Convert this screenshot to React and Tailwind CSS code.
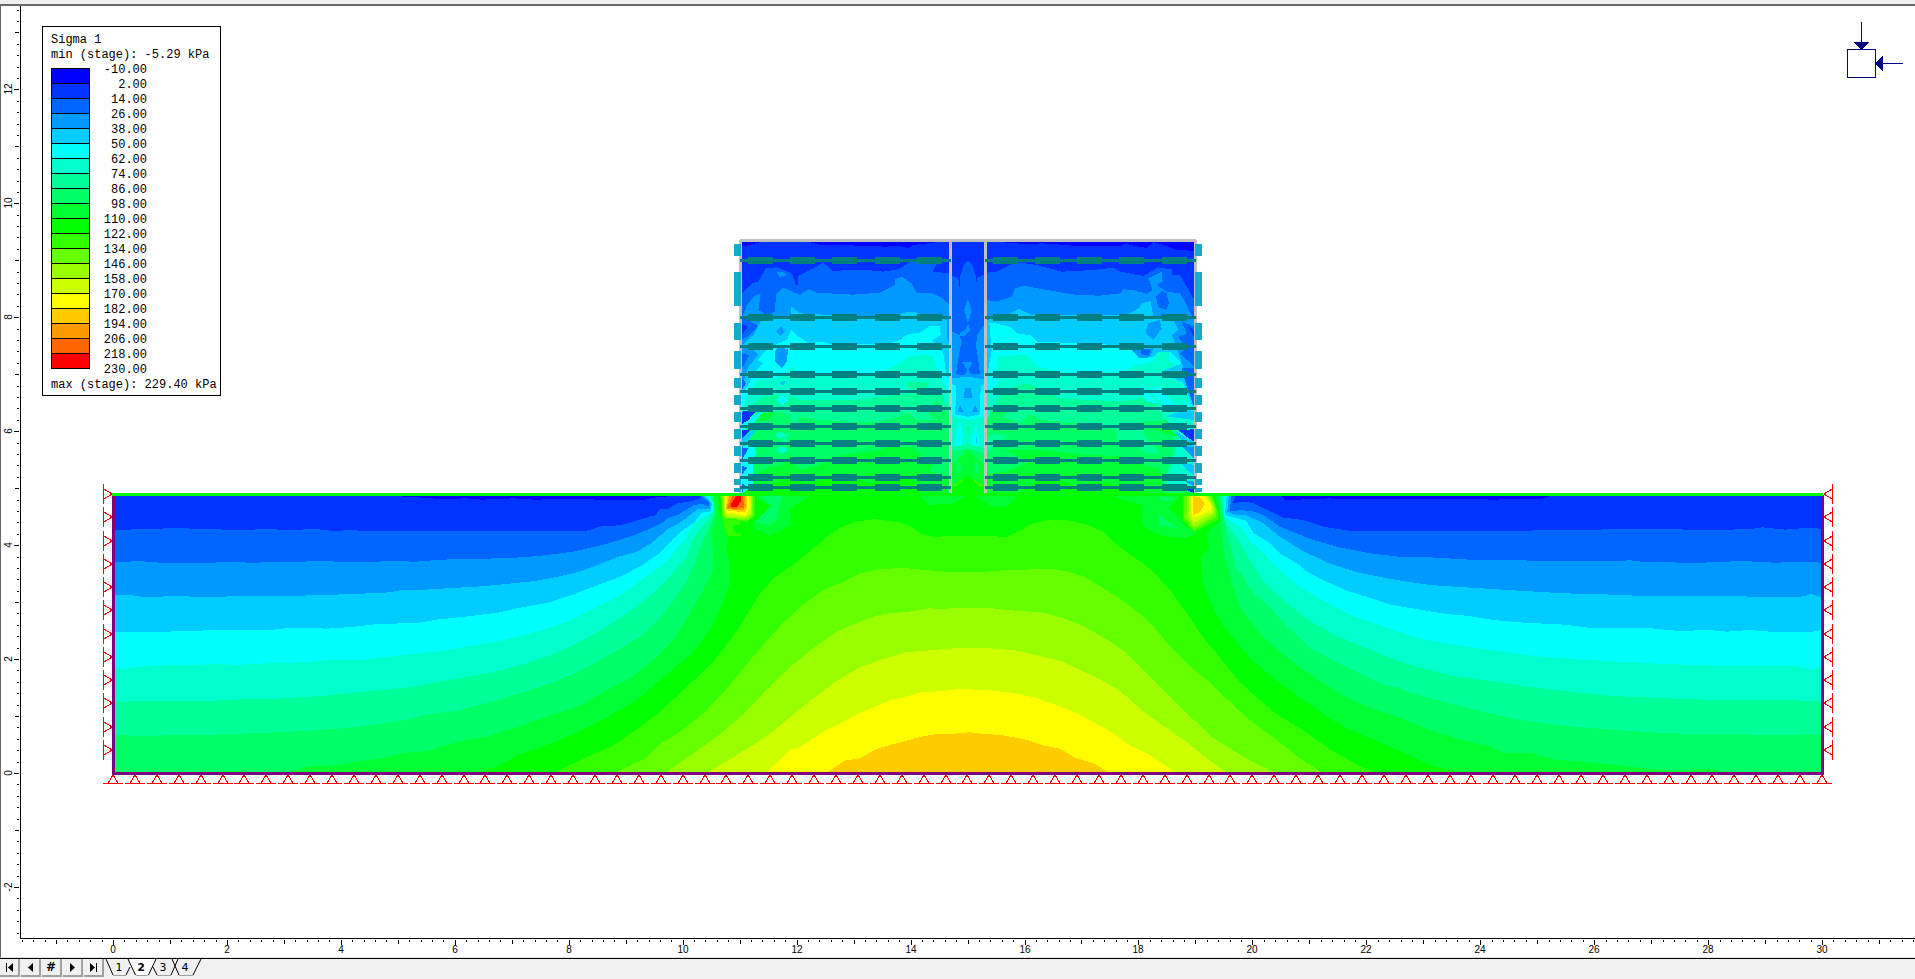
import clsx from "clsx";

const COLORS = [
  "#0000ff", "#0033ff", "#0066ff", "#0099ff", "#00ccff",
  "#00ffff", "#00ffcc", "#00ff99", "#00ff66", "#00ff33",
  "#00ff00", "#33ff00", "#66ff00", "#99ff00", "#ccff00",
  "#ffff00", "#ffcc00", "#ff9900", "#ff6600", "#ff0000",
];

const LEVELS = Array.from({ length: 21 }, (_, i) => (-10 + i * 12).toFixed(2));

// Every zone is [colour index, polygon points], painted from back to front.
const MOUND = [
  [11, "-255,906 -160,850 -120,830 -60,780 -10,735 50,670 100,610 130,575 165,520 200,460 225,410 245,370 280,322 320,290 350,262 385,225 420,190 450,168 480,155 525,147 560,153 590,158 615,170 640,192 670,200 755,198 850,200 885,180 910,162 950,150 980,149 1010,153 1050,165 1085,185 1120,225 1160,260 1205,300 1250,360 1285,420 1330,500 1370,560 1420,635 1469,690 1508,730 1581,785 1644,840 1711,885 1746,906"],
  [12, "-106,906 -36,865 0,822 50,785 105,730 165,655 210,585 260,515 300,460 350,405 400,360 450,335 490,310 540,297 600,294 640,299 700,305 800,305 850,300 960,297 1000,305 1040,320 1080,350 1120,380 1175,430 1210,470 1250,530 1300,590 1350,640 1400,700 1450,755 1500,800 1568,865 1620,906"],
  [13, "15,906 70,860 150,790 215,720 265,655 320,590 380,530 430,488 475,462 530,437 560,430 610,425 660,415 690,417 740,413 800,413 850,420 940,428 990,445 1040,470 1100,512 1145,550 1200,620 1250,680 1300,740 1350,800 1400,838 1450,875 1505,906"],
  [14, "118,906 165,872 215,835 265,795 315,745 370,690 430,635 490,592 540,570 600,547 670,540 740,533 800,534 870,541 920,555 980,572 1030,600 1080,630 1130,665 1180,720 1230,765 1290,815 1340,865 1385,906"],
  [15, "260,906 290,875 318,838 340,835 400,785 450,755 480,735 530,708 570,688 600,682 635,668 690,663 735,657 800,660 860,668 920,683 970,705 1010,723 1060,755 1110,790 1150,825 1200,855 1260,906"],
  [16, "410,906 455,870 485,867 535,835 580,820 640,800 680,792 740,790 760,786 780,790 840,796 900,810 940,826 980,836 1020,865 1060,878 1098,906"],
];

const LEFT_SOIL = [
  [9, "61,78 61,906 960,906 1005,885 1050,855 1130,820 1190,790 1270,740 1340,690 1426,600 1471,555 1491,525 1521,475 1551,400 1568,340 1568,280 1558,235 1564,205 1546,165 1536,120 1540,78"],
  [8, "61,78 61,906 490,906 535,888 610,886 650,876 720,863 780,847 830,843 900,815 970,801 1050,770 1120,740 1200,708 1260,665 1330,620 1390,560 1430,510 1465,440 1495,375 1528,300 1525,225 1525,175 1540,120 1533,78"],
  [9, "300,906 350,902 400,906"],
  [7, "61,78 61,796 120,797 240,796 330,793 460,787 540,781 630,774 670,768 760,752 830,733 900,722 945,707 1000,690 1060,667 1120,645 1190,609 1250,570 1310,528 1350,498 1395,447 1430,390 1460,340 1478,290 1500,220 1522,160 1535,110 1528,78"],
  [6, "61,78 61,696 150,692 300,692 370,688 480,685 570,678 630,670 720,660 790,650 850,636 940,617 985,608 1040,590 1100,568 1150,545 1220,502 1265,470 1320,428 1380,370 1425,315 1440,290 1460,265 1475,215 1490,185 1513,152 1530,110 1520,78"],
  [5, "61,78 61,595 80,597 105,592 165,587 300,583 370,584 440,580 520,577 590,570 680,569 720,562 780,554 830,547 870,542 920,530 990,516 1040,502 1110,480 1170,455 1235,415 1300,375 1345,335 1385,300 1420,265 1435,235 1460,205 1477,165 1505,140 1525,128 1528,100 1515,78"],
  [4, "61,78 61,487 150,487 210,484 320,480 435,481 480,475 530,474 580,476 640,471 700,463 805,458 850,449 920,440 1000,428 1050,414 1120,399 1180,375 1240,347 1300,320 1350,288 1395,250 1430,205 1455,178 1480,158 1498,128 1520,125 1524,100 1508,78"],
  [3, "61,78 61,374 105,376 125,380 240,379 260,381 410,378 460,379 540,376 650,372 735,367 760,361 790,361 860,356 960,349 1020,342 1090,333 1140,322 1200,305 1240,287 1290,262 1340,245 1375,220 1415,178 1450,155 1475,130 1490,117 1520,116 1520,98 1502,78"],
  [2, "61,78 61,276 95,275 120,273 150,276 180,279 270,278 350,277 410,278 440,276 560,274 700,276 720,273 800,275 860,269 950,266 1020,265 1100,258 1180,246 1220,235 1265,222 1300,209 1345,190 1400,160 1415,145 1440,135 1480,105 1500,102 1516,108 1516,98 1505,85 1498,78"],
  [1, "61,78 61,180 115,178 193,175 240,175 262,178 380,179 430,178 485,179 560,178 590,182 655,181 665,183 1215,183 1255,168 1300,166 1345,150 1385,135 1397,118 1415,117 1440,100 1480,92 1498,84 1492,78"],
  [0, "740,78 830,84 860,88 920,85 960,89 1040,85 1090,89 1200,86 1240,89 1360,89 1380,83 1430,78"],
];

const RIGHT_SOIL = [
  [9, "1470,78 -61,78 -52,150 -84,190 -78,235 -99,260 -94,340 -73,400 -42,470 0,528 25,565 90,630 160,690 240,755 290,785 370,825 410,845 480,885 545,906 1470,906"],
  [8, "1470,78 -53,78 -50,160 -38,260 -20,340 0,412 50,490 100,545 150,590 200,630 260,675 330,715 390,737 480,780 570,813 630,828 670,850 740,850 800,870 860,874 960,885 1030,897 1090,900 1200,897 1220,906 1470,906"],
  [7, "1470,78 -50,78 -44,130 -32,190 -11,290 0,305 30,365 70,405 120,470 180,535 250,580 330,625 360,643 400,652 430,668 500,690 580,715 700,748 820,768 920,777 1070,790 1230,792 1380,796 1440,793 1470,796"],
  [6, "1470,78 -46,78 -36,160 0,220 25,270 55,328 90,370 140,420 180,455 240,495 310,530 380,563 440,588 540,618 650,635 740,652 850,667 930,677 1080,685 1200,690 1330,690 1440,692 1470,692"],
  [5, "1470,78 -40,78 -40,140 0,170 30,220 45,230 90,290 150,350 210,392 290,440 340,460 420,493 480,512 560,528 670,546 760,560 860,569 960,575 1080,582 1200,587 1400,587 1450,600 1470,590"],
  [4, "1470,78 -34,78 -38,135 0,148 15,152 35,190 70,215 100,250 150,285 165,302 200,325 270,362 330,384 380,404 450,418 520,432 580,438 640,450 720,458 820,464 880,473 1030,474 1110,483 1190,480 1230,485 1290,480 1360,487 1440,487 1470,480"],
  [3, "1470,78 -28,78 -32,125 -10,135 15,135 60,160 95,195 150,237 220,278 300,308 380,327 480,345 570,352 690,361 820,370 920,373 1040,379 1200,379 1350,380 1420,380 1445,372 1470,382"],
  [2, "1470,78 -22,78 -26,124 0,121 25,122 60,135 100,170 180,208 250,232 330,250 400,260 480,262 580,269 700,271 850,274 970,274 980,270 1030,277 1170,278 1270,273 1350,278 1430,276 1470,278"],
  [1, "1470,78 -12,78 -18,100 5,96 30,98 70,120 110,143 160,150 210,170 280,183 460,183 520,184 600,183 680,184 750,181 830,181 930,178 1090,178 1210,180 1290,177 1320,172 1380,179 1430,174 1470,176"],
  [0, "105,78 115,89 200,88 225,85 260,88 340,86 600,88 650,89 680,86 765,86 785,78"],
];

const LEFT_TOE = [
  [9, "195,34 360,34 335,50 320,58 298,75 305,118 268,140 235,152 215,138 198,137 188,115 215,90 240,64 200,40"],
  [8, "210,34 278,34 270,60 262,105 235,120 195,112 222,85 247,62"],
  [7, "232,90 235,98 228,98"],
  [9, "72,34 98,34 100,90 112,130 95,145 76,110"],
  [10, "84,34 200,34 200,60 215,62 190,110 160,120 112,120 90,92"],
  [11, "91,34 194,34 194,92 172,112 150,112 150,120 126,122 132,142 154,146 154,153 115,152 106,140 98,104"],
  [12, "94,34 190,34 190,90 172,107 130,102 98,96"],
  [13, "98,34 186,34 187,90 165,103 104,97"],
  [14, "102,34 182,34 184,84 165,97 104,90"],
  [15, "106,34 177,34 180,66 168,92 138,86 106,84"],
  [16, "111,34 170,34 172,66 165,82 108,76"],
  [17, "117,34 164,34 167,62 160,76 110,72"],
  [18, "127,34 160,34 161,68 136,72 112,68"],
  [19, "138,34 154,34 152,50 140,66 122,66 122,58"],
];

const RIGHT_TOE = [
  [9, "-110,34 85,34 92,100 140,144 110,160 80,158 30,150 2,136 -22,120 -25,60"],
  [8, "28,34 40,34 76,38 55,48 34,46"],
  [8, "28,86 52,108 92,132 40,122 26,124"],
  [10, "88,34 56,70 90,98 100,118 140,143 180,128 213,110 208,80 190,34"],
  [11, "98,34 188,34 206,84 205,104 132,141 98,104"],
  [12, "103,34 184,34 200,78 198,96 132,135 103,100"],
  [13, "110,34 177,34 196,72 193,90 132,127 110,94"],
  [14, "117,34 171,34 190,66 190,84 150,104 130,116 118,90"],
  [15, "123,34 162,34 183,60 183,75 158,88 130,98 124,84"],
  [16, "130,34 150,36 165,58 148,82 130,90"],
];

const LEFT_WALL_FILL = [
  [10, "66,66 690,66 690,819 66,819"],
  [9, "66,66 66,819 100,800 160,790 205,768 260,790 340,775 400,782 420,778 450,790 470,780 560,772 580,785 605,819 690,819 690,66"],
  [8, "66,66 66,795 90,770 150,740 185,735 215,700 220,730 240,750 300,735 330,712 400,700 480,690 500,682 570,680 600,700 610,722 640,730 630,755 690,770 690,66"],
  [7, "66,66 66,640 110,600 170,580 190,575 215,600 205,650 185,700 165,690 200,640 240,590 300,600 380,605 480,605 565,580 590,600 640,600 625,575 650,540 690,590 690,66"],
  [6, "66,66 66,610 90,560 130,530 175,525 185,545 215,530 240,540 400,540 500,530 600,515 565,505 560,485 630,485 620,505 665,500 675,550 690,560 690,66"],
  [5, "66,66 66,570 85,525 110,480 170,475 200,455 220,440 225,458 480,458 540,430 565,410 620,405 640,410 655,460 675,500 690,530 690,66"],
  [4, "66,66 66,520 88,490 100,460 130,430 112,420 140,390 165,375 200,360 215,330 235,350 265,370 310,365 330,372 500,372 540,360 565,342 600,338 630,318 660,318 662,345 635,362 655,380 670,400 680,470 690,480 690,66"],
  [3, "66,66 66,500 85,440 115,405 95,385 66,375 100,345 110,325 125,300 180,292 215,290 212,258 240,280 330,285 400,290 540,288 570,277 600,290 640,285 680,300 680,350 690,375 690,66"],
  [2, "66,66 66,360 90,345 115,318 66,290 85,250 105,225 122,222 115,270 140,285 165,275 168,225 190,203 240,225 265,207 290,218 400,224 480,218 525,195 525,178 545,170 575,190 590,218 635,220 670,235 690,258 690,66"],
  [1, "66,66 66,222 95,190 115,185 138,145 170,142 210,158 218,165 228,195 234,195 234,168 280,145 310,128 338,152 440,150 490,155 535,148 565,128 590,115 650,130 638,155 690,160 690,66"],
  [0, "66,66 66,80 125,66"],
  [0, "265,66 300,74 420,77 500,80 535,77 565,84 580,75 660,66"],
  [3, "170,156 195,158 198,168 178,170"],
  [1, "66,310 84,320 66,345"],
  [3, "168,335 183,318 195,335 182,348"],
  [3, "175,380 205,388 200,425 185,445 165,425 165,395"],
  [4, "180,485 200,483 190,496 182,494"],
  [2, "66,400 88,405 75,430 66,445"],
  [2, "66,475 78,490 66,510"],
  [4, "540,282 560,276 590,276 600,290 580,302 550,300"],
  [5, "170,540 185,525 205,540 188,558"],
  [6, "165,645 185,635 200,645 180,658"],
  [6, "170,692 190,680 205,690 188,702"],
  [9, "105,598 130,580 165,575 150,595 115,605"],
  [5, "66,640 115,595 125,575 66,605"],
  [1, "66,575 110,570 85,600 66,612"],
  [4, "66,690 100,640 110,630 66,640"],
  [1, "66,630 90,630 72,650 66,655"],
  [5, "66,760 110,700 100,670 66,680"],
  [2, "66,682 85,685 66,720"],
  [5, "66,800 100,765 100,725 66,740"],
  [2, "66,738 82,742 66,765"],
  [5, "66,819 100,800 100,780 66,785"],
  [2, "66,790 75,795 66,819"],
];

const SLEEVE_FILL = [
  [10, "36,20 132,20 132,773 36,773"],
  [9, "36,20 132,20 132,755 105,735 84,722 62,735 36,755"],
  [8, "36,20 132,20 132,690 110,670 84,645 60,668 36,690"],
  [7, "36,20 132,20 132,655 84,640 36,650"],
  [6, "36,20 132,20 132,640 110,632 84,628 60,632 36,636"],
  [5, "36,20 132,20 132,545 100,553 84,556 60,550 36,540"],
  [4, "36,20 132,20 132,450 122,455 120,538 84,546 46,538 48,450 36,448"],
  [3, "36,20 132,20 132,433 84,425 36,430"],
  [2, "36,20 132,20 132,270 112,300 108,330 114,370 120,418 95,418 84,408 70,420 48,418 55,370 65,320 58,300 36,290"],
  [1, "36,20 132,20 132,118 112,128 110,140 108,125 97,90 84,78 72,88 60,125 59,158 55,130 36,122"],
  [3, "84,192 95,225 84,265 73,225"],
  [3, "84,268 92,285 75,302 58,302 62,292 76,285"],
  [3, "66,380 98,380 84,410"],
  [3, "76,460 92,460 98,490 70,490"],
  [3, "60,510 72,532 52,532"],
  [3, "106,512 116,532 95,532"],
  [5, "60,558 70,600 64,632 46,634 46,610"],
  [5, "108,565 120,632 98,632 96,605"],
  [4, "109,605 111,605 111,626 109,626"],
  [7, "78,575 92,575 84,605"],
  [8, "56,672 64,700 56,725 48,700"],
  [8, "108,672 118,700 108,725 100,700"],
  [11, "36,752 70,732 68,740 42,757"],
  [11, "100,732 132,752 126,757 102,740"],
];

const RIGHT_WALL_FILL = [
  [10, "81,66 702,66 702,819 81,819"],
  [9, "81,66 702,66 702,819 560,819 500,800 400,785 350,800 300,780 240,780 175,819 81,819"],
  [8, "81,66 81,765 150,750 200,730 160,700 120,690 250,690 380,705 480,708 550,735 600,745 610,819 702,819 702,66"],
  [7, "81,66 81,700 140,650 100,640 81,655 81,595 100,570 130,590 185,610 205,580 240,600 400,612 470,630 470,660 520,670 560,700 600,700 550,640 540,605 640,600 640,700 610,790 702,819 702,66"],
  [6, "81,66 81,600 110,540 160,500 200,490 250,510 300,535 480,545 550,535 590,555 620,600 660,640 640,720 620,790 702,819 702,66"],
  [5, "81,66 81,520 115,490 110,450 115,408 200,405 230,440 300,455 500,455 520,438 580,425 590,395 630,395 625,420 665,445 605,460 660,480 700,560 600,500 560,510 590,550 560,545 540,490 620,560 702,590 702,66"],
  [4, "81,66 81,470 95,390 88,310 105,310 150,320 170,340 210,345 230,365 420,372 520,380 535,415 580,410 630,395 665,430 605,455 670,490 702,570 702,66"],
  [3, "81,66 81,300 140,285 178,267 215,285 500,285 535,265 545,250 572,243 580,290 640,300 655,330 635,345 650,380 665,430 702,520 702,66"],
  [2, "81,66 81,240 110,245 155,230 165,205 190,197 260,210 350,225 420,227 480,220 490,208 520,210 560,222 578,210 565,175 605,155 608,185 590,195 620,215 660,220 680,255 702,300 702,66"],
  [1, "81,66 81,158 110,155 150,135 180,128 230,135 305,155 400,150 460,143 480,155 550,168 595,142 635,148 635,165 660,165 680,200 702,238 702,66"],
  [0, "81,66 150,68 200,73 245,70 340,77 480,78 500,68 510,75 560,84 580,66"],
  [0, "580,66 620,78 640,88 702,93 702,66"],
  [2, "588,230 605,212 620,220 627,250 618,270 595,262"],
  [3, "565,310 600,300 605,325 580,360 556,340"],
  [3, "515,390 580,385 570,412 540,415"],
  [2, "540,385 572,388 565,405 545,403"],
  [6, "580,415 595,395 630,395 625,415"],
  [2, "665,305 702,320 702,440 660,400 680,385 655,350 680,340"],
  [1, "685,318 702,330 702,350"],
  [2, "665,445 702,445 702,560 680,500"],
  [6, "600,500 640,505 680,560 640,550"],
  [8, "90,570 150,575 130,590 95,592"],
  [4, "620,590 680,565 702,575 702,600"],
  [9, "590,625 630,630 655,650 610,640"],
  [1, "655,630 702,628 702,665 680,650"],
  [4, "640,630 702,665 702,710 680,680"],
  [3, "665,680 702,680 702,715"],
  [4, "660,725 702,735 702,765 680,750"],
  [3, "670,780 702,785 702,800"],
  [1, "680,808 702,805 702,819 690,815"],
];

const FOUNDATION_PATCHES = [
  [9, "600,828 625,855 700,850 740,828"],
  [9, "765,828 820,862 860,862 890,828"],
];

const REBAR_ROWS = [260, 317, 346, 374, 391, 408, 426, 443, 460, 477, 487];
const REBAR_BLOCKS = [748, 790, 832, 875, 917, 993, 1035, 1077, 1119, 1162];
const FACING = [
  [244, 12], [272, 34], [323, 17], [351, 18], [378, 10], [395, 10],
  [412, 10], [429, 10], [446, 10], [463, 10], [479, 6], [488, 4],
];

const UNIT = 56.97;
const toX = (v) => Math.round(113 + v * UNIT);
const toY = (v) => Math.round(773 - v * UNIT);

function Zones({ data, transform }) {
  return (
    <g transform={transform}>
      {data.map(([level, points], i) => (
        <polygon key={i} points={points} fill={COLORS[level]} />
      ))}
    </g>
  );
}

function Supports() {
  const sides = Array.from({ length: 12 }, (_, i) => Math.round(494 + i * 23.27));
  const base = Array.from({ length: 79 }, (_, i) => Math.round(113 + i * 21.91));
  return (
    <g stroke="#ff0000" fill="none">
      {sides.map((y) => (
        <g key={y}>
          <path d={`M103.5 ${y - 10}v20M104 ${y - 5}L112 ${y}L104 ${y + 5}`} />
          <path d={`M1832.5 ${y - 10}v20M1832 ${y - 5}L1824 ${y}L1832 ${y + 5}`} />
        </g>
      ))}
      {base.map((x) => (
        <path key={x} d={`M${x - 10} 783.5h20M${x - 5} 783L${x} 775L${x + 5} 783`} />
      ))}
    </g>
  );
}

function Rulers() {
  const xTicks = Array.from({ length: 167 }, (_, i) => i - 8);
  const yTicks = Array.from({ length: 82 }, (_, i) => i - 14);
  const xLabels = Array.from({ length: 16 }, (_, i) => i * 2);
  const yLabels = Array.from({ length: 8 }, (_, i) => i * 2 - 2);
  const size = (t) => (t % 10 === 0 ? 5 : t % 5 === 0 ? 4 : 2);
  return (
    <g fill="#000">
      <rect x="20" y="6" width="1" height="933" />
      <rect x="20" y="938" width="1895" height="1" />
      {xTicks.map((t) => (
        <rect key={t} x={toX(t / 5)} y="940" width="1" height={size(t)} />
      ))}
      {yTicks.map((t) => (
        <rect key={t} x={19 - size(t)} y={toY(t / 5)} width={size(t)} height="1" />
      ))}
      <g className="font-['Liberation_Sans',Arial,sans-serif] text-[10px]" textAnchor="middle">
        {xLabels.map((v) => (
          <text key={v} x={toX(v)} y="953">{v}</text>
        ))}
        {yLabels.map((v) => (
          <text key={v} transform={`translate(12 ${toY(v)}) rotate(-90)`}>{v}</text>
        ))}
      </g>
    </g>
  );
}

function Wall() {
  return (
    <g>
      <Zones data={LEFT_WALL_FILL} transform="translate(720 220) scale(0.33333)" />
      <Zones data={RIGHT_WALL_FILL} transform="translate(960 220) scale(0.33333)" />
      <Zones data={SLEEVE_FILL} transform="translate(940 235) scale(0.33333)" />
      <g fill="#c0c0c0">
        <rect x="740" y="239" width="456" height="3" />
        <rect x="739" y="240" width="3" height="253" />
        <rect x="949" y="242" width="3" height="251" />
        <rect x="984" y="242" width="3" height="251" />
        <rect x="1194" y="240" width="3" height="253" />
      </g>
      <g fill="#14aacc">
        {FACING.map(([y, h]) => (
          <g key={y}>
            <rect x="734" y={y} width="7" height={h} />
            <rect x="1195" y={y} width="7" height={h} />
          </g>
        ))}
      </g>
      <g fill="#008080">
        {REBAR_ROWS.map((y) => (
          <g key={y}>
            <rect x="740" y={y - 1} width="211" height="3" />
            <rect x="985" y={y - 1} width="211" height="3" />
            {REBAR_BLOCKS.map((x) => (
              <rect key={x} x={x} y={y - 3} width="25" height="7" />
            ))}
          </g>
        ))}
      </g>
    </g>
  );
}

function StressPlot() {
  return (
    <svg
      className="block h-full w-full"
      viewBox="1 6 1914 951"
      preserveAspectRatio="xMinYMin meet"
      shapeRendering="crispEdges"
      role="img"
      aria-label="Sigma 1 contour plot"
    >
      <rect x="113" y="494" width="1710" height="280" fill="#00ff00" />
      <Zones data={MOUND} transform="translate(660 470) scale(0.40816 0.33333)" />
      <Zones data={LEFT_SOIL} transform="translate(90 470) scale(0.40816 0.33333)" />
      <Zones data={RIGHT_SOIL} transform="translate(1240 470) scale(0.39541 0.33333)" />
      <Zones data={FOUNDATION_PATCHES} transform="translate(720 220) scale(0.33333)" />
      <Zones data={LEFT_TOE} transform="translate(690 485) scale(0.33333)" />
      <Zones data={RIGHT_TOE} transform="translate(1150 485) scale(0.33333)" />
      <Wall />
      <rect x="112" y="495" width="3" height="280" fill="#800080" />
      <rect x="1821" y="495" width="3" height="280" fill="#800080" />
      <rect x="112" y="772" width="1712" height="3" fill="#800080" />
      <rect x="112" y="493" width="1711" height="3" fill="#00ff00" />
      <Supports />
      <Rulers />
      <g fill="#000080">
        <rect x="1847.5" y="49.5" width="28" height="28" fill="none" stroke="#000080" />
        <rect x="1861" y="22" width="1" height="22" />
        <polygon points="1854,42 1869,42 1861.5,50" />
        <rect x="1882" y="63" width="21" height="1" />
        <polygon points="1883,56 1883,71 1875,63.5" />
      </g>
    </svg>
  );
}

function Legend() {
  return (
    <section className="absolute top-[20px] left-[41px] w-[179px] border border-black bg-white px-2 pt-[6px] pb-[2px] font-['Liberation_Mono','Courier_New',monospace] text-[12px] leading-[15px] whitespace-nowrap text-black">
      <h1>Sigma 1</h1>
      <p>min (stage): -5.29 kPa</p>
      <div className="flex">
        <ul className="mt-[5px] w-[39px] self-start border-x border-b border-black">
          {COLORS.map((color) => (
            <li key={color} className="h-[15px] border-t border-black" style={{ backgroundColor: color }} />
          ))}
        </ul>
        <ol className="w-[57px] text-right">
          {LEVELS.map((level) => (
            <li key={level}>{level}</li>
          ))}
        </ol>
      </div>
      <p>max (stage): 229.40 kPa</p>
    </section>
  );
}

const NAV_BUTTONS = [
  { label: "First stage", d: "M6 4h1v9h-1zM13 4v9l-5-4.500z" },
  { label: "Previous stage", d: "M12 4v9l-5-4.500z" },
  { label: "Stage number", text: "#" },
  { label: "Next stage", d: "M7 4v9l5-4.500z" },
  { label: "Last stage", d: "M6 4v9l5-4.500zM12 4h1v9h-1z" },
];

function StageBar() {
  return (
    <footer className="flex h-[21px] shrink-0 border-t border-black bg-[#f0f0f0] font-['DejaVu_Sans',Verdana,sans-serif] text-black">
      <div className="flex gap-px">
        {NAV_BUTTONS.map((b) => (
          <button
            key={b.label}
            type="button"
            aria-label={b.label}
            className="flex h-[18px] w-[20px] items-center justify-center border-r-2 border-b-2 border-[#a0a0a0] bg-[#f0f0f0] text-[12px] font-bold"
          >
            {b.text ?? (
              <svg className="h-[16px] w-[18px]" viewBox="0 0 18 16" aria-hidden="true">
                <path d={b.d} />
              </svg>
            )}
          </button>
        ))}
      </div>
      <nav className="relative flex h-[17px] pl-[4px]" aria-label="Stages">
        <svg className="absolute top-0 left-0 h-[17px] w-[100px]" viewBox="104 0 100 17" fill="none" stroke="#000" aria-hidden="true">
          <path d="M106 0L113 16M126 16L130 8" />
          <path d="M128 0L135.500 16H148.500L156 0z" fill="#fff" stroke="none" />
          <path d="M128 0L135.500 16M148.500 16L156 0M153 8L157 16M171 16L178 0M172 0L179 16M193 16L201 0" />
          <path d="M113 16.500H126M136 16.500H148M157 16.500H171M179 16.500H193" stroke="#a0a0a0" />
        </svg>
        {[1, 2, 3, 4].map((n) => (
          <button
            key={n}
            type="button"
            className={clsx("relative w-[22px] text-center text-[11px] leading-[17px]", n === 2 && "font-bold")}
          >
            {n}
          </button>
        ))}
      </nav>
    </footer>
  );
}

export default function App() {
  return (
    <div className="flex h-screen flex-col overflow-hidden bg-white">
      <div className="h-[4px] shrink-0 bg-[#f0f0f0]" />
      <main className="relative min-h-0 flex-1 border-t-2 border-b border-l border-t-[#696969] border-b-[#e3e3e3] border-l-[#696969]">
        <StressPlot />
        <Legend />
      </main>
      <StageBar />
    </div>
  );
}
